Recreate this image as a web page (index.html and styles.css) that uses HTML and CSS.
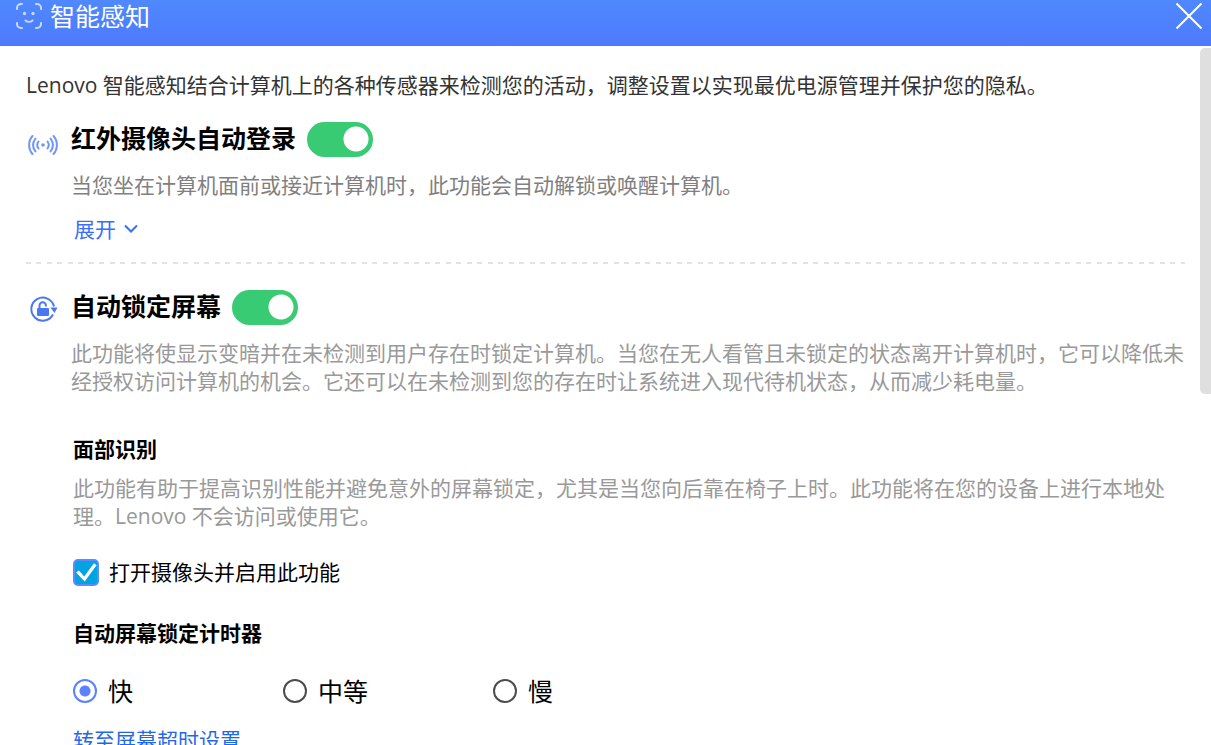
FILE: index.html
```html
<!DOCTYPE html>
<html lang="zh-CN">
<head>
    <meta charset="UTF-8">
    <meta name="viewport" content="width=device-width, initial-scale=1.0">
    <title>智能感知</title>
    <link rel="stylesheet" href="styles.css">
</head>
<body>
    <header class="titlebar">
        <svg class="title-icon" width="26" height="26" viewBox="0 0 26 26" fill="none" stroke="currentColor" stroke-width="2" stroke-linecap="round">
            <path d="M1 6V5a4 4 0 0 1 4-4h1M20 1h1a4 4 0 0 1 4 4v1M25 20v1a4 4 0 0 1-4 4h-1M6 25H5a4 4 0 0 1-4-4v-1"/>
            <path d="M9.500 17.500c2 1.800 5 1.800 7 0"/>
            <circle cx="8.500" cy="10.500" r="1.700" fill="currentColor" stroke="none"/>
            <circle cx="17" cy="10.500" r="1.700" fill="currentColor" stroke="none"/>
        </svg>
        <h1>智能感知</h1>
        <button class="close" type="button" aria-label="关闭">
            <svg width="28" height="28" viewBox="0 0 28 28" fill="none" stroke="currentColor" stroke-width="2">
                <path d="M1.500 1.500l25 25M26.500 1.500l-25 25"/>
            </svg>
        </button>
    </header>
    <div class="page">
        <main class="content">
            <p class="intro">Lenovo 智能感知结合计算机上的各种传感器来检测您的活动，调整设置以实现最优电源管理并保护您的隐私。</p>

            <section class="feature">
                <svg class="feature-icon" width="34" height="24" viewBox="0 0 34 24" fill="none" stroke="currentColor" stroke-width="2" stroke-linecap="round">
                    <circle cx="17" cy="12" r="1.800" fill="currentColor" stroke="none"/>
                    <path d="M12.500 8.500c-1.500 2-1.500 5 0 7M9.500 5.500c-3 4-3 9 0 13M6.500 3c-4.500 5-4.500 13 0 18"/>
                    <path d="M21.500 8.500c1.500 2 1.500 5 0 7M24.500 5.500c3 4 3 9 0 13M27.500 3c4.500 5 4.500 13 0 18"/>
                </svg>
                <div class="feature-body">
                    <div class="feature-head">
                        <h2><label for="auto-login">红外摄像头自动登录</label></h2>
                        <input class="toggle" type="checkbox" id="auto-login" checked>
                    </div>
                    <p class="desc dark">当您坐在计算机面前或接近计算机时，此功能会自动解锁或唤醒计算机。</p>
                    <button class="expand" type="button">展开
                        <svg width="14" height="10" viewBox="0 0 14 10" fill="none" stroke="currentColor" stroke-width="2">
                            <path d="M1 1.500l6 6 6-6"/>
                        </svg>
                    </button>
                </div>
            </section>

            <div class="divider"></div>

            <section class="feature">
                <svg class="feature-icon lock" width="34" height="28" viewBox="0 0 34 28" fill="none" stroke="currentColor" stroke-width="2">
                    <path d="M27 19.500a11.500 11.500 0 1 1 1-8"/>
                    <path d="M24.500 12.500h7l-3 5.500z" fill="currentColor" stroke="none"/>
                    <path d="M13.500 14v-3.500a3.200 3.200 0 0 1 6.400 0v1"/>
                    <rect x="11" y="13" width="12" height="8" rx="1" fill="currentColor" stroke="none"/>
                </svg>
                <div class="feature-body">
                    <div class="feature-head">
                        <h2><label for="auto-lock">自动锁定屏幕</label></h2>
                        <input class="toggle" type="checkbox" id="auto-lock" checked>
                    </div>
                    <p class="desc">此功能将使显示变暗并在未检测到用户存在时锁定计算机。当您在无人看管且未锁定的状态离开计算机时，它可以降低未经授权访问计算机的机会。它还可以在未检测到您的存在时让系统进入现代待机状态，从而减少耗电量。</p>

                    <div class="options">
                        <h3>面部识别</h3>
                        <p class="desc">此功能有助于提高识别性能并避免意外的屏幕锁定，尤其是当您向后靠在椅子上时。此功能将在您的设备上进行本地处理。Lenovo 不会访问或使用它。</p>
                        <label class="check">
                            <input type="checkbox" checked>
                            打开摄像头并启用此功能
                        </label>

                        <h3 id="timer-title">自动屏幕锁定计时器</h3>
                        <div class="radios" role="radiogroup" aria-labelledby="timer-title">
                            <label><input type="radio" name="timer" checked>快</label>
                            <label><input type="radio" name="timer">中等</label>
                            <label><input type="radio" name="timer">慢</label>
                        </div>
                        <a class="link" href="#">转至屏幕超时设置</a>
                    </div>
                </div>
            </section>
        </main>
        <div class="scrollbar"></div>
    </div>
</body>
</html>
```
FILE: styles.css
```css
* {
    box-sizing: border-box;
}
body {
    margin: 0;
    height: 100vh;
    display: flex;
    flex-direction: column;
    overflow: hidden;
    background-color: #ffffff;
    color: #000000;
    font-family: "Open Sans", "Noto Sans CJK SC", sans-serif;
    font-size: 21px;
    line-height: 28px;
}
h1, h2, h3, p {
    margin: 0;
}
button {
    background: none;
    border: none;
    padding: 0;
    font: inherit;
    cursor: pointer;
}
svg {
    display: block;
}
.titlebar {
    flex: none;
    display: flex;
    align-items: center;
    gap: 8px;
    height: 46px;
    padding: 0 8px 14px 16px;
    background: linear-gradient(#4f88ff, #4d7afc);
    color: #ffffff;
}
.title-icon {
    color: #c9daff;
}
.titlebar h1 {
    flex: 1;
    font-size: 25px;
    font-weight: normal;
}
.close {
    color: #ffffff;
}
.page {
    flex: 1;
    min-height: 0;
    position: relative;
    overflow: hidden;
}
.content {
    padding: 25px 26px 40px;
}
.scrollbar {
    position: absolute;
    top: 2px;
    right: 0;
    width: 11px;
    height: 346px;
    border-radius: 5px 0 0 5px;
    background-color: #dfdfdf;
}
.intro {
    color: #333333;
}
.feature {
    display: grid;
    grid-template-columns: 45px 1fr;
    margin-top: 23px;
}
.feature-icon {
    margin-top: 11px;
    color: #6f95fa;
}
.feature-icon.lock {
    margin-top: 5px;
    color: #4a78f5;
}
.feature-head {
    display: flex;
    align-items: center;
    gap: 11px;
    margin-bottom: 14px;
}
h2 {
    font-size: 25px;
    padding-bottom: 3px;
}
h3 {
    font-size: 21px;
}
.toggle {
    appearance: none;
    width: 66px;
    height: 35px;
    margin: 0;
    border-radius: 18px;
    background: radial-gradient(circle at 49px 17px, #ffffff 12px, transparent 13px) #38cb74;
}
.desc {
    color: #999999;
}
.desc.dark {
    color: #808080;
}
.expand {
    display: flex;
    align-items: center;
    gap: 8px;
    margin: 16px 0 0 3px;
    color: #3b6ef5;
}
.divider {
    height: 2px;
    margin-top: 19px;
    background: repeating-linear-gradient(90deg, #e3e3e3 0 5px, transparent 5px 10px, #e3e3e3 10px 15px, transparent 15px 21px);
}
.divider + .feature {
    margin-top: 26px;
}
.options {
    padding-left: 2px;
    margin-top: 40px;
}
.options .desc {
    margin-top: 11px;
}
.check {
    display: flex;
    align-items: center;
    gap: 10px;
    margin: 28px 0 33px;
}
.check input {
    appearance: none;
    width: 26px;
    height: 27px;
    margin: 0;
    border: 2px solid #5a8bff;
    border-radius: 5px;
    background-color: #00a4e0;
    display: grid;
    place-items: center;
}
.check input:checked::before {
    content: "";
    width: 22px;
    height: 20px;
    background-color: #ffffff;
    clip-path: polygon(5% 52%, 18% 42%, 42% 72%, 86% 6%, 98% 16%, 44% 98%);
}
.radios {
    display: flex;
    margin: 30px 0 21px;
    font-size: 25px;
}
.radios label {
    display: flex;
    align-items: center;
    gap: 11px;
    width: 210px;
}
.radios input {
    appearance: none;
    width: 24px;
    height: 24px;
    margin: 0;
    border: 2px solid #4c4c4c;
    border-radius: 50%;
}
.radios input:checked {
    border-color: #5a82ff;
    background: radial-gradient(circle, #5a82ff 5px, transparent 6px);
}
.link {
    color: #1f69e8;
    text-decoration: none;
}
```
